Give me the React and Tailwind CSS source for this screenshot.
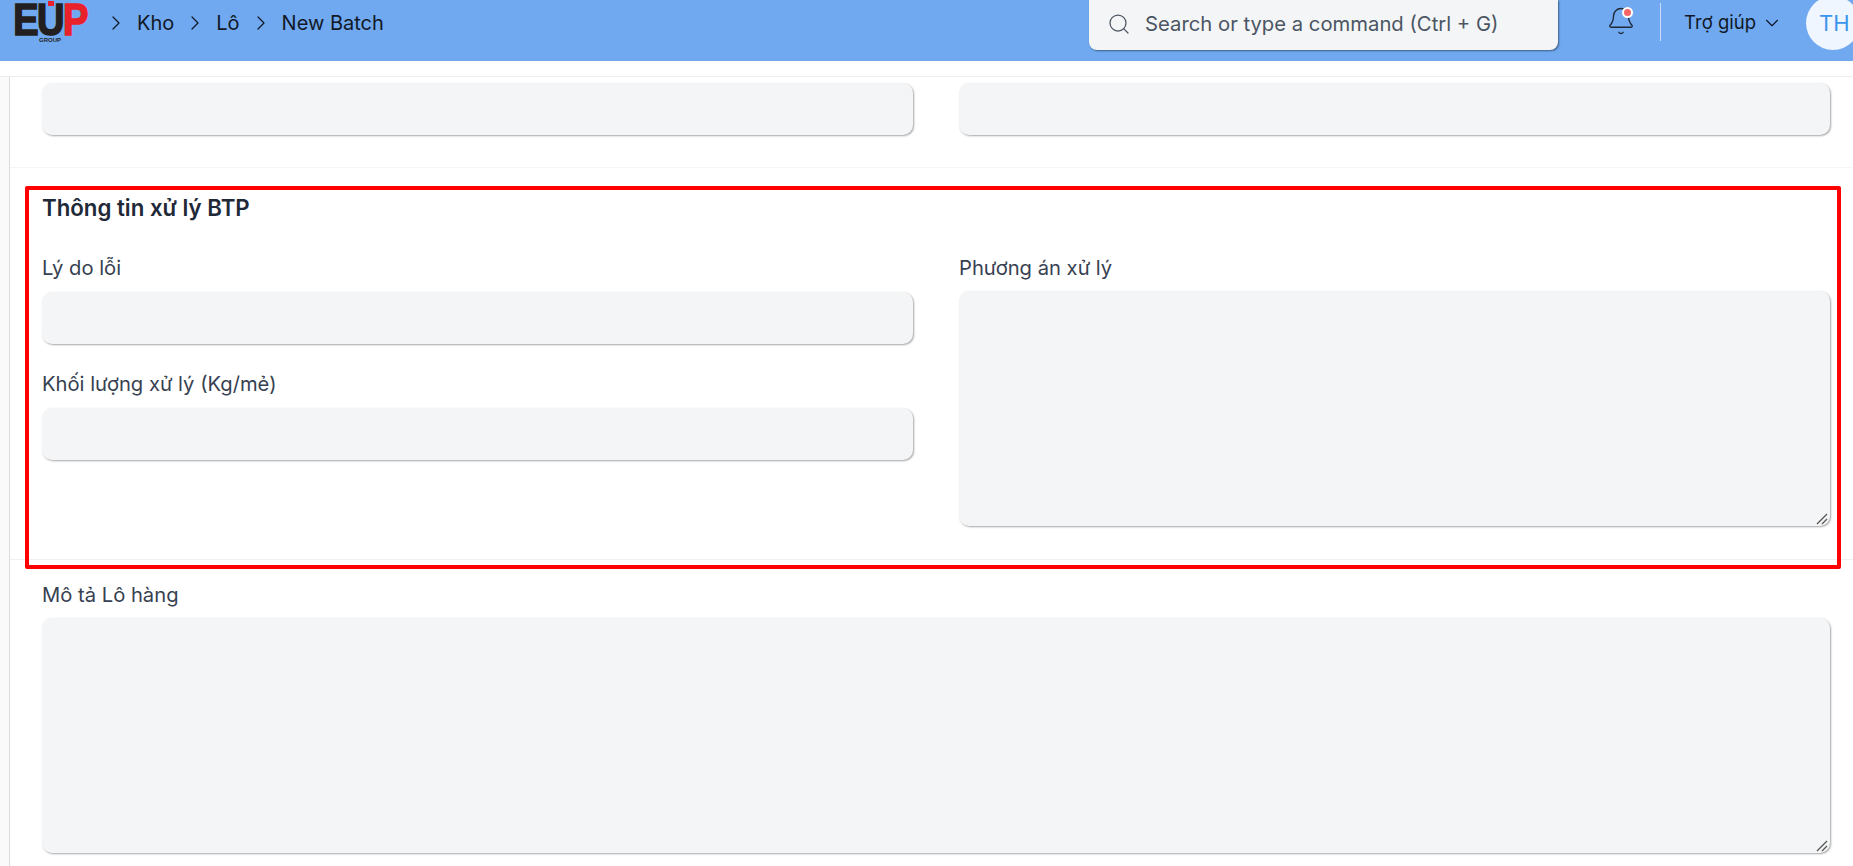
import React from "react";
import { ChevronRight, ChevronDown, Search, Bell } from "lucide-react";

const fieldClass =
    "block w-full bg-[#f4f5f6] rounded-[10px] shadow-[1px_1px_2px_rgba(0,0,0,0.35)] outline-none";
const labelClass = "block text-[20.2px] leading-[24px] text-[#374151]";

const Field = ({ label, className = "" }) => (
    <div className={className}>
        {label && <label className={`${labelClass} mb-[12px]`}>{label}</label>}
        <input className={`${fieldClass} h-[52px]`} />
    </div>
);

const TextArea = ({ label }) => (
    <div>
        <label className={`${labelClass} mb-[11px]`}>{label}</label>
        <div className="relative">
            <textarea className={`${fieldClass} h-[235px] resize-none`} />
            {/* resize grip */}
            <svg className="absolute right-[2px] bottom-[1px] w-[12px] h-[12px]" viewBox="0 0 12 12">
                <path d="M1 11 L11 1 M6 11 L11 6" stroke="#555" strokeWidth="1.3" fill="none" />
            </svg>
        </div>
    </div>
);

const Logo = () => (
    <div className="relative w-[72px] h-[61px] flex flex-col items-center select-none font-['Liberation_Sans',sans-serif]">
        <div className="h-[34px] text-[38px] leading-[34px] font-bold tracking-[-1.5px] scale-y-[1.16] origin-top [-webkit-text-stroke:1.5px_currentColor] whitespace-nowrap">
            <span className="text-[#231f20]">EU</span>
            <span className="text-[#e8212a]">P</span>
        </div>
        <span className="absolute left-[34px] top-[1px] w-[6px] h-[5px] bg-[#e8212a]" />
        <span className="mt-[3px] text-[6px] leading-[6px] font-bold text-[#231f20]">GROUP</span>
    </div>
);

const Header = () => (
    <header className="h-[61px] bg-[#70a9f0] flex items-start text-[#111827]">
        <div className="ml-[14px]">
            <Logo />
        </div>
        <nav className="ml-[18px] h-[46px] flex items-center gap-[9px] text-[20px]">
            <ChevronRight className="w-[24px] h-[24px]" strokeWidth={1.25} />
            <span>Kho</span>
            <ChevronRight className="w-[24px] h-[24px]" strokeWidth={1.25} />
            <span>Lô</span>
            <ChevronRight className="w-[24px] h-[24px]" strokeWidth={1.25} />
            <span>New Batch</span>
        </nav>
        <div className="flex-1" />
        <div className="w-[469px] h-[50px] pb-[2px] bg-[#f4f5f6] rounded-b-[8px] shadow-[1px_1px_2px_rgba(0,0,0,0.45)] flex items-center pl-[18px] text-[#4b5563]">
            <Search className="w-[24px] h-[24px] mr-[14px]" strokeWidth={1.25} />
            <span className="text-[20.25px]">Search or type a command (Ctrl + G)</span>
        </div>
        <div className="relative ml-[48px] mt-[6px] w-[30px] h-[30px]">
            <Bell className="w-[30px] h-[30px] text-[#1f2937]" strokeWidth={1.1} />
            <span className="absolute top-[1px] right-[3px] w-[11px] h-[11px] rounded-full bg-[#f56565] border-2 border-white" />
        </div>
        <div className="ml-[24px] mt-[3px] w-px h-[38px] bg-[#c5dbf7]" />
        <div className="ml-[23px] h-[46px] flex items-center text-[#111827]">
            <span className="text-[18.5px]">Trợ giúp</span>
            <ChevronDown className="w-[22px] h-[22px] ml-[5px]" strokeWidth={1.25} />
        </div>
        <div className="ml-[23px] w-[47px] h-[50px] shrink-0 overflow-hidden">
            <div className="w-[54px] h-[54px] -mt-[4px] rounded-full bg-[#eff6ff] text-[#3b94ee] text-[22px] flex items-center pl-[13px]">
                TH
            </div>
        </div>
    </header>
);

export default function App() {
    return (
        <div className="h-[866px] overflow-hidden bg-white font-['Inter',sans-serif]">
            <Header />
            <div className="h-[16px] border-b border-[#eeeeee]" />
            <div className="relative flex h-[789px]">
                {/* Left gutter */}
                <div className="w-[10px] shrink-0 bg-[#fafafa] border-r border-[#dcdcdc]" />
                <main className="flex-1 min-w-0 pt-[6px]">
                    <div className="grid grid-cols-2 gap-x-[46px] pb-[32px] pl-[32px] pr-[23px] border-b border-[#f5f5f5]">
                        <Field />
                        <Field />
                    </div>

                    <section className="pt-[26px] pb-[33px] pl-[32px] pr-[23px] border-b border-[#f0f0f0]">
                        <h2 className="text-[22.25px] leading-[28px] font-semibold text-[#1f2937] mb-[34px]">
                            Thông tin xử lý BTP
                        </h2>
                        <div className="grid grid-cols-2 gap-x-[46px]">
                            <div>
                                <Field label="Lý do lỗi" />
                                <Field label="Khối lượng xử lý (Kg/mẻ)" className="mt-[28px]" />
                            </div>
                            <TextArea label="Phương án xử lý" />
                        </div>
                    </section>

                    <div className="pt-[23px] pl-[32px] pr-[23px]">
                        <TextArea label="Mô tả Lô hàng" />
                    </div>
                </main>
                {/* Annotation drawn over the screenshot */}
                <div className="absolute left-[25px] top-[109px] w-[1816px] h-[383px] border-4 border-[#ff0000] rounded-[2px] pointer-events-none" />
            </div>
        </div>
    );
}
